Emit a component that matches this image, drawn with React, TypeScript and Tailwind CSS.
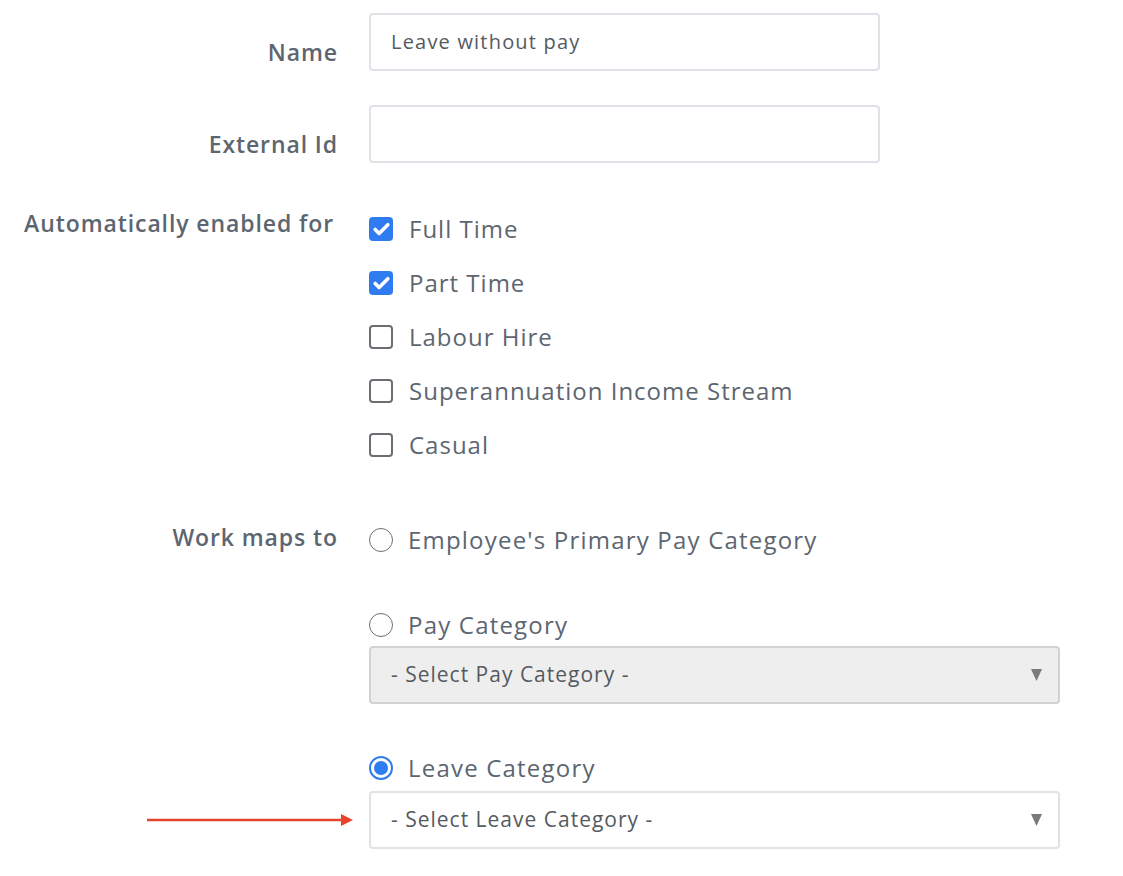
import { Check } from "lucide-react";

const font = { fontFamily: "'Open Sans', Lato, sans-serif" };

const employmentTypes = [
  { label: "Full Time", checked: true },
  { label: "Part Time", checked: true },
  { label: "Labour Hire", checked: false },
  { label: "Superannuation Income Stream", checked: false },
  { label: "Casual", checked: false },
];

function Label({ children, className = "" }: { children: React.ReactNode; className?: string }) {
  return (
    <div className={`text-right text-[23px] font-semibold text-[#5d6670] tracking-[0.9px] pr-[31px] ${className}`}>
      {children}
    </div>
  );
}

function CheckBox({ checked }: { checked: boolean }) {
  return checked ? (
    <span className="w-[24px] h-[24px] rounded-[4px] bg-[#2f7bf0] flex items-center justify-center shrink-0">
      <Check className="w-[19px] h-[19px] text-white" strokeWidth={4.5} />
    </span>
  ) : (
    <span className="w-[24px] h-[24px] rounded-[4px] border-2 border-[#6b6f73] bg-white shrink-0" />
  );
}

function Radio({ checked }: { checked: boolean }) {
  return checked ? (
    <span className="w-[24px] h-[24px] rounded-full border-2 border-[#2f7bf0] flex items-center justify-center shrink-0">
      <span className="w-[14px] h-[14px] rounded-full bg-[#2f7bf0]" />
    </span>
  ) : (
    <span className="w-[24px] h-[24px] rounded-full border-[1.5px] border-[#6b6f73] bg-white shrink-0" />
  );
}

function Select({ text, disabled }: { text: string; disabled?: boolean }) {
  return (
    <div
      className={`w-[691px] h-[58px] rounded-[4px] border-2 flex items-center justify-between pl-[20px] pr-[16px] text-[21px] tracking-[1px] text-[#555a5f] ${
        disabled ? "bg-[#eeeeee] border-[#d2d2d2]" : "bg-white border-[#dfe3e7]"
      }`}
    >
      <span>{text}</span>
      <svg width="11" height="12" viewBox="0 0 11 12">
        <polygon points="0,0 11,0 5.5,12" fill="#7a7a7a" />
      </svg>
    </div>
  );
}

export default function App() {
  return (
    <div className="w-[1123px] h-[876px] bg-white pt-[13px]" style={font}>
      {/* name + external id */}
      <div className="flex items-center">
        <Label className="w-[369px] pt-[20px]">Name</Label>
        <div className="w-[511px] h-[58px] rounded-[4px] border-2 border-[#dfe3e7] flex items-center pl-[20px] text-[20px] tracking-[1.2px] text-[#555a5f]">
          Leave without pay
        </div>
      </div>
      <div className="flex items-center mt-[34px]">
        <Label className="w-[369px] pt-[20px]">External Id</Label>
        <div className="w-[511px] h-[58px] rounded-[4px] border-2 border-[#dfe3e7]" />
      </div>

      {/* employment types */}
      <div className="flex mt-[51px]">
        <Label className="w-[369px] pr-[35px] leading-[32px] -mt-[7px]">Automatically enabled for</Label>
        <div className="flex flex-col gap-[24px]">
          {employmentTypes.map((t) => (
            <div key={t.label} className="flex items-center gap-[16px] h-[30px] text-[24px] tracking-[1px] text-[#5d6670]">
              <CheckBox checked={t.checked} />
              <span>{t.label}</span>
            </div>
          ))}
        </div>
      </div>

      {/* work mapping */}
      <div className="flex mt-[65px]">
        <Label className="w-[369px] leading-[32px] -mt-[4px]">Work maps to</Label>
        <div className="flex flex-col text-[24px] tracking-[1.2px] text-[#5d6670]">
          <div className="flex items-center gap-[15px] h-[30px]">
            <Radio checked={false} />
            <span>Employee's Primary Pay Category</span>
          </div>
          <div className="flex items-center gap-[15px] h-[30px] mt-[55px]">
            <Radio checked={false} />
            <span>Pay Category</span>
          </div>
          <div className="mt-[6px]">
            <Select text="- Select Pay Category -" disabled />
          </div>
          <div className="flex items-center gap-[15px] h-[30px] mt-[49px]">
            <Radio checked />
            <span>Leave Category</span>
          </div>
          <div className="mt-[8px] relative">
            <Select text="- Select Leave Category -" />
            {/* pointer arrow */}
            <svg className="absolute left-[-222px] top-[22px]" width="210" height="14" viewBox="0 0 210 14">
              <line x1="0" y1="7" x2="196" y2="7" stroke="#e8432e" strokeWidth="2.5" />
              <polygon points="194,1 206,7 194,13" fill="#e8432e" />
            </svg>
          </div>
        </div>
      </div>
    </div>
  );
}
